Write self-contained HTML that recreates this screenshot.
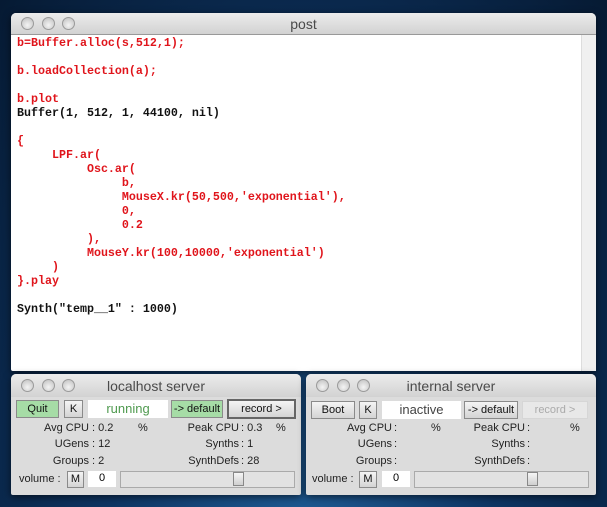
<!DOCTYPE html>
<html><head><meta charset="utf-8"><style>
*{margin:0;padding:0;box-sizing:border-box}
body{width:607px;height:507px;overflow:hidden;position:relative;font-family:"Liberation Sans",sans-serif;
background:radial-gradient(ellipse at 50% 110%,#1f5c95 0%,#0e3563 45%,#061a33 100%);}
.win{position:absolute;background:#dcdcdc;border-radius:5px 5px 2px 2px;box-shadow:0 2px 8px rgba(0,0,0,.6)}
.tb{position:absolute;left:0;right:0;top:0;border-radius:5px 5px 0 0;background:linear-gradient(#ececec,#d2d2d2);color:#4a4a4a;text-align:center;font-size:14px}
.c{position:absolute;width:13px;height:13px;border-radius:50%;background:radial-gradient(circle at 50% 65%,#f4f4f4,#bdbdbd);border:1px solid #9a9a9a}
pre{position:absolute;left:17px;top:36px;font-family:"Liberation Mono",monospace;font-weight:bold;font-size:11.67px;line-height:14px;color:#e0141b;white-space:pre}
.k{color:#111}
.b{position:absolute;font-size:11px;text-align:center;border:1px solid #8a8a8a;background:linear-gradient(#f4f4f4,#d4d4d4);line-height:16px;height:18px;color:#111}
.g{background:#a6dca6}
.f{position:absolute;background:#fff;text-align:center}
.l{position:absolute;font-size:11px;color:#222;white-space:pre}
</style></head><body>
<div class="win" style="left:11px;top:13px;width:585px;height:358px;background:#fff">
<div class="tb" style="height:22px;line-height:22px;border-bottom:1px solid #999">post</div>
<div class="c" style="left:10px;top:4px"></div><div class="c" style="left:31px;top:4px"></div><div class="c" style="left:51px;top:4px"></div>
<div style="position:absolute;right:0;top:22px;width:15px;bottom:0;background:#f0f0f0;border-left:1px solid #ddd"></div>
</div>
<pre>b=Buffer.alloc(s,512,1);

b.loadCollection(a);

b.plot
<span class="k">Buffer(1, 512, 1, 44100, nil)</span>

{
     LPF.ar(
          Osc.ar(
               b,
               MouseX.kr(50,500,'exponential'),
               0,
               0.2
          ),
          MouseY.kr(100,10000,'exponential')
     )
}.play

<span class="k">Synth("temp__1" : 1000)</span></pre>

<div class="win" style="left:11px;top:374px;width:290px;height:121px">
<div class="tb" style="height:23px;line-height:24px">localhost server</div>
<div class="c" style="left:10px;top:5px"></div><div class="c" style="left:31px;top:5px"></div><div class="c" style="left:51px;top:5px"></div>
</div>
<div class="b g" style="left:16px;top:400px;width:43px">Quit</div>
<div class="b" style="left:64px;top:400px;width:19px">K</div>
<div class="f" style="left:88px;top:400px;width:80px;height:18px;line-height:18px;color:#4f9a4f;font-size:13px">running</div>
<div class="b g" style="left:171px;top:400px;width:52px">-&gt; default</div>
<div class="b" style="left:227px;top:399px;width:69px;height:20px;border:2px solid #666">record &gt;</div>
<div class="l" style="left:20px;top:422px;width:69px;text-align:right">Avg CPU</div><div class="l" style="left:92px;top:422px">: 0.2</div><div class="l" style="left:138px;top:422px">%</div>
<div class="l" style="left:150px;top:422px;width:89px;text-align:right">Peak CPU</div><div class="l" style="left:241px;top:422px">: 0.3</div><div class="l" style="left:276px;top:422px">%</div>
<div class="l" style="left:20px;top:438px;width:69px;text-align:right">UGens</div><div class="l" style="left:92px;top:438px">: 12</div>
<div class="l" style="left:150px;top:438px;width:89px;text-align:right">Synths</div><div class="l" style="left:241px;top:438px">: 1</div>
<div class="l" style="left:20px;top:455px;width:69px;text-align:right">Groups</div><div class="l" style="left:92px;top:455px">: 2</div>
<div class="l" style="left:150px;top:455px;width:89px;text-align:right">SynthDefs</div><div class="l" style="left:241px;top:455px">: 28</div>
<div class="l" style="left:19px;top:473px">volume :</div>
<div class="b" style="left:67px;top:471px;width:17px;height:17px;line-height:15px">M</div>
<div class="f" style="left:88px;top:471px;width:28px;height:16px;font-size:11px;line-height:14px">0</div>
<div style="position:absolute;left:120px;top:471px;width:175px;height:17px;border:1px solid #aaa;background:#e2e2e2"></div>
<div style="position:absolute;left:233px;top:472px;width:11px;height:14px;border:1px solid #888;background:linear-gradient(#f6f6f6,#cfcfcf)"></div>

<div class="win" style="left:306px;top:374px;width:290px;height:121px">
<div class="tb" style="height:23px;line-height:24px">internal server</div>
<div class="c" style="left:10px;top:5px"></div><div class="c" style="left:31px;top:5px"></div><div class="c" style="left:51px;top:5px"></div>
</div>
<div class="b" style="left:311px;top:401px;width:44px">Boot</div>
<div class="b" style="left:359px;top:401px;width:18px">K</div>
<div class="f" style="left:382px;top:401px;width:79px;height:18px;line-height:18px;color:#444;font-size:13px">inactive</div>
<div class="b" style="left:464px;top:401px;width:54px">-&gt; default</div>
<div class="b" style="left:522px;top:401px;width:66px;color:#aaa;border-color:#d6d6d6;background:#e8e8e8">record &gt;</div>
<div class="l" style="left:310px;top:422px;width:82px;text-align:right">Avg CPU</div><div class="l" style="left:394px;top:422px">:</div><div class="l" style="left:431px;top:422px">%</div>
<div class="l" style="left:445px;top:422px;width:80px;text-align:right">Peak CPU</div><div class="l" style="left:527px;top:422px">:</div><div class="l" style="left:570px;top:422px">%</div>
<div class="l" style="left:310px;top:438px;width:82px;text-align:right">UGens</div><div class="l" style="left:394px;top:438px">:</div>
<div class="l" style="left:445px;top:438px;width:80px;text-align:right">Synths</div><div class="l" style="left:527px;top:438px">:</div>
<div class="l" style="left:310px;top:455px;width:82px;text-align:right">Groups</div><div class="l" style="left:394px;top:455px">:</div>
<div class="l" style="left:445px;top:455px;width:80px;text-align:right">SynthDefs</div><div class="l" style="left:527px;top:455px">:</div>
<div class="l" style="left:312px;top:473px">volume :</div>
<div class="b" style="left:359px;top:471px;width:18px;height:17px;line-height:15px">M</div>
<div class="f" style="left:382px;top:471px;width:28px;height:16px;font-size:11px;line-height:14px">0</div>
<div style="position:absolute;left:414px;top:471px;width:175px;height:17px;border:1px solid #aaa;background:#e2e2e2"></div>
<div style="position:absolute;left:527px;top:472px;width:11px;height:14px;border:1px solid #888;background:linear-gradient(#f6f6f6,#cfcfcf)"></div>
</body></html>
